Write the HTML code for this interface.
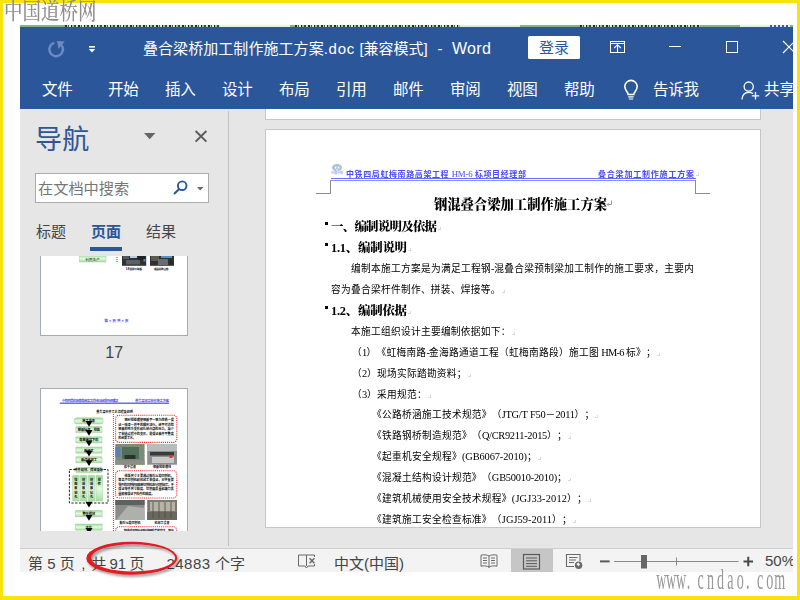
<!DOCTYPE html>
<html lang="zh-CN">
<head>
<meta charset="utf-8">
<title>叠合梁桥加工制作施工方案.doc [兼容模式] - Word</title>
<style>
*{box-sizing:border-box;margin:0;padding:0}
html,body{width:800px;height:600px;overflow:hidden;background:#fff}
body{position:relative;font-family:"Liberation Sans","Noto Sans CJK SC",sans-serif;color:#222}
.abs{position:absolute}
#frame{position:absolute;left:0;top:0;width:800px;height:600px;border-style:solid;border-color:#f8e30c;border-width:3px 3px 4px 3px;z-index:50;pointer-events:none}
#wm1{left:4px;top:-6.5px;z-index:60;font-family:"Liberation Serif","Noto Serif CJK SC",serif;font-size:18.5px;font-weight:500;color:#8e8e8e;white-space:nowrap;transform-origin:0 0;transform:scaleY(1.2)}
#wm2{left:0;top:0;z-index:30}
#win{left:20px;top:25px;width:773px;height:547px;overflow:hidden;background:#e6e6e6}
#bgstrip{left:0;top:0;width:773px;height:2px;background:#84b581}
#blue{left:0;top:2px;width:773px;height:82px;background:#2b579a}
.t{position:absolute;white-space:nowrap;color:#fff}
.tt{top:10px;font-size:15px}
.tab{position:absolute;top:50px;font-size:15.5px;letter-spacing:-0.2px;color:#fff;white-space:nowrap}
#login{left:508px;top:9px;width:52px;height:23px;border-radius:1.5px;background:#fff;color:#2b579a;font-size:15px;text-align:center;line-height:24px}
#nav{left:0;top:84px;width:209px;height:439px;background:#e6e6e6}
#split{left:208px;top:86px;width:1px;height:435px;background:#c2c2c2}
#navtitle{left:15px;top:9px;font-size:27px;color:#2b579a;white-space:nowrap;letter-spacing:0.3px}
#search{left:15px;top:64px;width:174px;height:30px;background:#fff;border:1px solid #ababab}
#search span{position:absolute;left:2px;top:2px;font-size:15.2px;color:#767676;white-space:nowrap}
.ntab{position:absolute;top:111px;font-size:15px;color:#444;white-space:nowrap}
#thumbs{left:0;top:147px;width:209px;height:275px;overflow:hidden}
.thumb{position:absolute;left:20px;width:149px;background:#fff;border:1px solid #a6adba}
#doc{left:209px;top:84px;width:564px;height:439px;background:#e6e6e6;overflow:hidden}
#pg0{left:36px;top:-5px;width:496px;height:16px;background:#fff;border:1px solid #c6c6c6}
#pg1{left:36px;top:20px;width:496px;height:399px;background:#fff;border:1px solid #c6c6c6}
#status{left:0;top:523px;width:773px;height:24px;background:#f3f3f3;border-top:1px solid #d0d0d0}
.st{position:absolute;top:3px;font-size:15px;color:#444;white-space:nowrap}
.song{font-family:"Liberation Serif","Noto Serif CJK SC",serif}
.dl{position:absolute;white-space:nowrap;font-family:"Liberation Serif","Noto Sans CJK SC",sans-serif;font-size:9px;color:#000;text-spacing-trim:space-all;line-height:14px}
.en{font-family:"Liberation Serif",serif;font-size:10.4px;letter-spacing:-0.25px;word-spacing:0.6px}
.hdr .en{font-size:8.8px;letter-spacing:-0.2px;word-spacing:0.5px;font-weight:normal}
.hd{position:absolute;white-space:nowrap;font-family:"Liberation Serif","Noto Serif CJK SC",serif;font-weight:900;color:#000}
.hdr{position:absolute;white-space:nowrap;font-family:"Liberation Serif","Noto Sans CJK SC",sans-serif;color:#4a4aff;line-height:11px;font-weight:bold}
.pm{position:absolute;width:3px;height:3px;border-right:1px solid #dadada;border-bottom:1px solid #dadada}
.bul{position:absolute;width:3px;height:3px;background:#000}
</style>
</head>
<body>
<div id="wm1" class="abs">中国道桥网</div>
<div id="win" class="abs">
  <div id="bgstrip" class="abs">
    <div class="abs" style="left:45px;top:0;width:155px;height:2px;background:repeating-linear-gradient(90deg,#2a2a2a 0 2px,#b9d6b5 2px 3px,#555 3px 4px,#dfeadd 4px 6px,#1f1f1f 6px 7px,#9cc798 7px 9px,#444 9px 11px,#cfe0cc 11px 13px)"></div>
    <div class="abs" style="left:200px;top:0;width:70px;height:2px;background:#e9f0e8"></div>
    <div class="abs" style="left:275px;top:0;width:165px;height:2px;background:repeating-linear-gradient(90deg,#2a2a2a 0 2px,#b9d6b5 2px 3px,#555 3px 4px,#dfeadd 4px 6px,#1f1f1f 6px 7px,#9cc798 7px 9px,#444 9px 11px,#cfe0cc 11px 13px)"></div>
    <div class="abs" style="left:440px;top:0;width:60px;height:2px;background:#dfe9dd"></div>
    <div class="abs" style="left:560px;top:0;width:120px;height:2px;background:repeating-linear-gradient(90deg,#2a2a2a 0 2px,#b9d6b5 2px 3px,#555 3px 4px,#dfeadd 4px 6px,#1f1f1f 6px 7px,#9cc798 7px 9px,#444 9px 11px,#cfe0cc 11px 13px)"></div>
    <div class="abs" style="left:720px;top:0;width:30px;height:2px;background:#e6ece6"></div>
    <div class="abs" style="left:750px;top:0;width:20px;height:2px;background:repeating-linear-gradient(90deg,#4b4bd0 0 2px,#dfe6f5 2px 4px)"></div>
  </div>
  <div id="blue" class="abs">
    <div class="t tt" style="left:123px"><span style="letter-spacing:0.06px">叠合梁桥加工制作施工方案</span><span id="t2" style="letter-spacing:0.7px">.doc</span> <span id="t3" style="margin-left:0.33px">[兼容模式]</span> <span id="t4" style="margin-left:5.53px">-</span> <span id="t5" style="margin-left:5.33px;letter-spacing:0.35px;font-size:16px">Word</span></div>
    <div id="login" class="abs">登录</div>
    <div class="tab" style="left:22px">文件</div>
    <div class="tab" style="left:88px">开始</div>
    <div class="tab" style="left:145px">插入</div>
    <div class="tab" style="left:202px">设计</div>
    <div class="tab" style="left:259px">布局</div>
    <div class="tab" style="left:316px">引用</div>
    <div class="tab" style="left:373px">邮件</div>
    <div class="tab" style="left:430px">审阅</div>
    <div class="tab" style="left:487px">视图</div>
    <div class="tab" style="left:544px">帮助</div>
    <div class="tab" style="left:633px">告诉我</div>
    <div class="tab" style="left:744px">共享</div>
  </div>
  <div id="nav" class="abs">
    <div id="navtitle" class="abs">导航</div>
    <div id="search" class="abs"><span>在文档中搜索</span></div>
    <div class="ntab" style="left:16px">标题</div>
    <div class="ntab" style="left:71px;color:#2b579a;font-weight:bold">页面</div>
    <div class="ntab" style="left:126px">结果</div>
    <div class="abs" style="left:70px;top:138px;width:32px;height:4px;background:#2b579a"></div>
    <div id="thumbs" class="abs">
<svg class="abs" style="left:-20px;top:-256px" width="800" height="600" viewBox="0 0 800 600">
<defs><linearGradient id="gg" x1="0" y1="0" x2="0" y2="1"><stop offset="0" stop-color="#9ddb98"/><stop offset="0.5" stop-color="#e4fae1"/><stop offset="1" stop-color="#a6e0a1"/></linearGradient></defs>
<rect x="40.5" y="240.5" width="147" height="95" fill="#fff" stroke="#a3abb9"/>
<rect x="79.5" y="255" width="26.5" height="7" rx="0" fill="url(#gg)" stroke="#8fbf88" stroke-width="0.4"/>
<text x="92.7" y="260.6" font-size="3.6" text-anchor="middle" fill="#222" font-family="'Liberation Sans','Noto Sans CJK SC',sans-serif">利用生产</text>
<path d="M117 255 V263" stroke="#e8282c" stroke-width="1.2" stroke-dasharray="1 1"/>
<rect x="122" y="255" width="24.2" height="10.8" fill="#2f3133"/><rect x="123" y="256" width="6" height="3" fill="#55585c"/><rect x="130" y="255.500" width="7" height="2.500" fill="#b9cbe6"/><rect x="138" y="256" width="7" height="4" fill="#1f2123"/><rect x="126" y="260" width="14" height="4.500" fill="#5d6062"/><rect x="143.500" y="259" width="2" height="2.500" fill="#4f86d0"/>
<rect x="150" y="255" width="24" height="10.8" fill="#33302e"/><rect x="151" y="256" width="8" height="5" fill="#5c5a55"/><rect x="161" y="255.500" width="11" height="2.500" fill="#5a8fd0"/><rect x="158" y="259" width="10" height="6" fill="#6a6c6d"/><rect x="169" y="260" width="4" height="5" fill="#27292a"/>
<text x="134" y="269.7" font-size="2.7" textLength="16.500" text-anchor="middle" fill="#000" font-weight="bold" font-family="'Liberation Sans','Noto Sans CJK SC',sans-serif">1-8 组拼平联板</text>
<text x="161.2" y="269.7" font-size="2.7" textLength="14.500" text-anchor="middle" fill="#000" font-weight="bold" font-family="'Liberation Sans','Noto Sans CJK SC',sans-serif">成品验收合格</text>
<text x="116.400" y="322.4" font-size="3.7" text-anchor="middle" font-weight="bold" fill="#5252ff" font-family="'Liberation Sans','Noto Sans CJK SC',sans-serif">第 × 页 共 × 页</text>
<text x="114.2" y="357.5" font-size="16" text-anchor="middle" fill="#444" font-family="'Liberation Sans',sans-serif">17</text>
<rect x="40.5" y="388.5" width="147" height="180" fill="#fff" stroke="#a3abb9"/>
<text x="62" y="402.4" font-size="3.3" fill="#5050f5" font-weight="bold" textLength="56" font-family="'Liberation Sans','Noto Sans CJK SC',sans-serif">中铁四局虹梅南路高架工程HM-6标项目经理部</text>
<text x="135" y="402.4" font-size="3.3" fill="#5050f5" font-weight="bold" textLength="34" font-family="'Liberation Sans','Noto Sans CJK SC',sans-serif">叠合梁加工制作施工方案</text>
<path d="M59.8 403.3 H169" stroke="#6a6af8" stroke-width="1.6"/>
<text x="114.6" y="412.9" font-size="3.05" text-anchor="middle" fill="#000" font-weight="bold" font-family="'Liberation Sans','Noto Sans CJK SC',sans-serif">叠合梁杆件工艺流程及说明</text>
<rect x="74" y="417.8" width="29.3" height="6.2" rx="3" fill="url(#gg)" stroke="#8fbf88" stroke-width="0.4"/>
<text x="88.65" y="422.4" font-size="3.2" text-anchor="middle" fill="#000" font-weight="bold" font-family="'Liberation Sans','Noto Sans CJK SC',sans-serif">施工准备</text>
<rect x="75.8" y="426.6" width="26.2" height="6" rx="0.5" fill="url(#gg)" stroke="#8fbf88" stroke-width="0.4"/>
<text x="88.89999999999999" y="431.0" font-size="3.2" text-anchor="middle" fill="#000" font-weight="bold" font-family="'Liberation Sans','Noto Sans CJK SC',sans-serif">钢板矫平、预处</text>
<rect x="75.8" y="436.8" width="26.2" height="6.2" rx="0.5" fill="url(#gg)" stroke="#8fbf88" stroke-width="0.4"/>
<text x="88.89999999999999" y="441.4" font-size="3.2" text-anchor="middle" fill="#000" font-weight="bold" font-family="'Liberation Sans','Noto Sans CJK SC',sans-serif">电脑放样下料</text>
<rect x="75.8" y="447" width="26.2" height="6.2" rx="0.5" fill="url(#gg)" stroke="#8fbf88" stroke-width="0.4"/>
<text x="88.89999999999999" y="451.59999999999997" font-size="3.2" text-anchor="middle" fill="#000" font-weight="bold" font-family="'Liberation Sans','Noto Sans CJK SC',sans-serif">板加工</text>
<rect x="75.8" y="456.7" width="26.2" height="6" rx="0.5" fill="url(#gg)" stroke="#8fbf88" stroke-width="0.4"/>
<text x="88.89999999999999" y="461.09999999999997" font-size="3.2" text-anchor="middle" fill="#000" font-weight="bold" font-family="'Liberation Sans','Noto Sans CJK SC',sans-serif">板边缘加工</text>
<path d="M85.5 421.0 H92.5 L89.0 426.8 Z" fill="#000"/>
<path d="M85.5 430.0 H92.5 L89.0 435.8 Z" fill="#000"/>
<path d="M85.5 440.4 H92.5 L89.0 446.2 Z" fill="#000"/>
<path d="M85.5 450.6 H92.5 L89.0 456.4 Z" fill="#000"/>
<path d="M85.5 460.2 H92.5 L89.0 466.0 Z" fill="#000"/>
<rect x="69.4" y="469.5" width="38.6" height="33.5" fill="none" stroke="#111" stroke-width="0.9" stroke-dasharray="2.4 1.4"/>
<rect x="76" y="467.4" width="25.5" height="5.2" rx="0.5" fill="url(#gg)" stroke="#8fbf88" stroke-width="0.4"/>
<text x="88.7" y="471.4" font-size="3.2" text-anchor="middle" fill="#000" font-weight="bold" font-family="'Liberation Sans','Noto Sans CJK SC',sans-serif">杆件组拼、焊接及矫</text>
<rect x="72.6" y="475.4" width="6.6" height="25.6" rx="0.3" fill="url(#gg)" stroke="#8fbf88" stroke-width="0.4"/>
<text x="75.89999999999999" y="481.0" font-size="3.2" text-anchor="middle" fill="#000" font-weight="bold" font-family="'Liberation Sans','Noto Sans CJK SC',sans-serif">弦</text>
<text x="75.89999999999999" y="485.2" font-size="3.2" text-anchor="middle" fill="#000" font-weight="bold" font-family="'Liberation Sans','Noto Sans CJK SC',sans-serif">腹</text>
<text x="75.89999999999999" y="489.4" font-size="3.2" text-anchor="middle" fill="#000" font-weight="bold" font-family="'Liberation Sans','Noto Sans CJK SC',sans-serif">板</text>
<text x="75.89999999999999" y="493.6" font-size="3.2" text-anchor="middle" fill="#000" font-weight="bold" font-family="'Liberation Sans','Noto Sans CJK SC',sans-serif">制</text>
<text x="75.89999999999999" y="497.8" font-size="3.2" text-anchor="middle" fill="#000" font-weight="bold" font-family="'Liberation Sans','Noto Sans CJK SC',sans-serif">孔</text>
<rect x="80.4" y="475.4" width="6.6" height="25.6" rx="0.3" fill="url(#gg)" stroke="#8fbf88" stroke-width="0.4"/>
<text x="83.7" y="481.0" font-size="3.2" text-anchor="middle" fill="#000" font-weight="bold" font-family="'Liberation Sans','Noto Sans CJK SC',sans-serif">拼</text>
<text x="83.7" y="485.2" font-size="3.2" text-anchor="middle" fill="#000" font-weight="bold" font-family="'Liberation Sans','Noto Sans CJK SC',sans-serif">接</text>
<text x="83.7" y="489.4" font-size="3.2" text-anchor="middle" fill="#000" font-weight="bold" font-family="'Liberation Sans','Noto Sans CJK SC',sans-serif">板</text>
<text x="83.7" y="493.6" font-size="3.2" text-anchor="middle" fill="#000" font-weight="bold" font-family="'Liberation Sans','Noto Sans CJK SC',sans-serif">制</text>
<text x="83.7" y="497.8" font-size="3.2" text-anchor="middle" fill="#000" font-weight="bold" font-family="'Liberation Sans','Noto Sans CJK SC',sans-serif">孔</text>
<rect x="88.2" y="475.4" width="6.6" height="25.6" rx="0.3" fill="url(#gg)" stroke="#8fbf88" stroke-width="0.4"/>
<text x="91.5" y="481.0" font-size="3.2" text-anchor="middle" fill="#000" font-weight="bold" font-family="'Liberation Sans','Noto Sans CJK SC',sans-serif">拼</text>
<text x="91.5" y="485.2" font-size="3.2" text-anchor="middle" fill="#000" font-weight="bold" font-family="'Liberation Sans','Noto Sans CJK SC',sans-serif">接</text>
<text x="91.5" y="489.4" font-size="3.2" text-anchor="middle" fill="#000" font-weight="bold" font-family="'Liberation Sans','Noto Sans CJK SC',sans-serif">板</text>
<text x="91.5" y="493.6" font-size="3.2" text-anchor="middle" fill="#000" font-weight="bold" font-family="'Liberation Sans','Noto Sans CJK SC',sans-serif">钻</text>
<text x="91.5" y="497.8" font-size="3.2" text-anchor="middle" fill="#000" font-weight="bold" font-family="'Liberation Sans','Noto Sans CJK SC',sans-serif">孔</text>
<rect x="96" y="475.4" width="6.6" height="25.6" rx="0.3" fill="url(#gg)" stroke="#8fbf88" stroke-width="0.4"/>
<text x="99.3" y="481.0" font-size="3.2" text-anchor="middle" fill="#000" font-weight="bold" font-family="'Liberation Sans','Noto Sans CJK SC',sans-serif">探</text>
<text x="99.3" y="485.2" font-size="3.2" text-anchor="middle" fill="#000" font-weight="bold" font-family="'Liberation Sans','Noto Sans CJK SC',sans-serif">伤</text>
<path d="M85.5 501.8 H92.5 L89.0 507.6 Z" fill="#000"/>
<rect x="75.4" y="510.5" width="26.8" height="6.2" rx="0.5" fill="url(#gg)" stroke="#8fbf88" stroke-width="0.4"/>
<text x="88.8" y="515.2" font-size="3.2" text-anchor="middle" fill="#000" font-weight="bold" font-family="'Liberation Sans','Noto Sans CJK SC',sans-serif">整体预拼</text>
<path d="M85.5 515.0 H92.5 L89.0 520.8 Z" fill="#000"/>
<rect x="75.4" y="524" width="26.8" height="6.2" rx="0.5" fill="url(#gg)" stroke="#8fbf88" stroke-width="0.4"/>
<text x="88.8" y="528.7" font-size="3.2" text-anchor="middle" fill="#000" font-weight="bold" font-family="'Liberation Sans','Noto Sans CJK SC',sans-serif">涂装</text>
<path d="M85.5 528.0 H92.5 L89.0 533.8 Z" fill="#000"/>
<path d="M113.4 414 V532" stroke="#e8282c" stroke-width="1" stroke-dasharray="1 1"/>
<rect x="115.6" y="415.2" width="61.2" height="27.2" rx="3.5" fill="none" stroke="#e8282c" stroke-width="1.1" stroke-dasharray="1.1 1"/>
<rect x="115.6" y="470.800" width="61.2" height="27.2" rx="3.5" fill="none" stroke="#e8282c" stroke-width="1.1" stroke-dasharray="1.1 1"/>
<rect x="115.6" y="526.800" width="61.2" height="27.2" rx="3.5" fill="none" stroke="#e8282c" stroke-width="1.1" stroke-dasharray="1.1 1"/>
<text x="118.3" y="421.2" font-size="3.1" fill="#000" font-weight="bold" font-family="'Liberation Sans','Noto Sans CJK SC',sans-serif" textLength="55.5">　　钢材预处理使钢板平一钢为除锈一保</text>
<text x="118.3" y="425.7" font-size="3.1" fill="#000" font-weight="bold" font-family="'Liberation Sans','Noto Sans CJK SC',sans-serif" textLength="55.5">证一喷漆一烘干的顺序进行。经平可消除</text>
<text x="118.3" y="430.2" font-size="3.1" fill="#000" font-weight="bold" font-family="'Liberation Sans','Noto Sans CJK SC',sans-serif" textLength="55.5">钢板的残余变形和扎制内部的应力。减少</text>
<text x="118.3" y="434.7" font-size="3.1" fill="#000" font-weight="bold" font-family="'Liberation Sans','Noto Sans CJK SC',sans-serif" textLength="55.5">了制造过程中的变形，是保证板件平整度</text>
<text x="118.3" y="439.2" font-size="3.1" fill="#000" font-weight="bold" font-family="'Liberation Sans','Noto Sans CJK SC',sans-serif" textLength="17.5">的必要工艺。</text>
<text x="118.3" y="476.8" font-size="3.1" fill="#000" font-weight="bold" font-family="'Liberation Sans','Noto Sans CJK SC',sans-serif" textLength="55.5">　　排版尺寸主要通过数控火焰切割机、</text>
<text x="118.3" y="481.3" font-size="3.1" fill="#000" font-weight="bold" font-family="'Liberation Sans','Noto Sans CJK SC',sans-serif" textLength="55.5">等离子切割机和机加工来保证。对于重要</text>
<text x="118.3" y="485.8" font-size="3.1" fill="#000" font-weight="bold" font-family="'Liberation Sans','Noto Sans CJK SC',sans-serif" textLength="55.5">零件的切割使用精密切割机进行切割加工。手</text>
<text x="118.3" y="490.3" font-size="3.1" fill="#000" font-weight="bold" font-family="'Liberation Sans','Noto Sans CJK SC',sans-serif" textLength="55.5">保证零件尺寸精度、切割面质量和坡口质</text>
<text x="118.3" y="494.8" font-size="3.1" fill="#000" font-weight="bold" font-family="'Liberation Sans','Noto Sans CJK SC',sans-serif" textLength="36">量能够保证下料件的精度。</text>
<text x="118.3" y="532.3" font-size="3.1" fill="#000" font-weight="bold" font-family="'Liberation Sans','Noto Sans CJK SC',sans-serif" textLength="55.5">　　划线采用划针和粉线相结合的方法，划出</text>
<rect x="115.3" y="444" width="29.3" height="20.7" fill="#7d8a7c"/><rect x="122" y="447" width="17" height="12" fill="#4f6f58"/><rect x="115.3" y="447" width="5" height="10" fill="#5c7fae"/><rect x="124.500" y="455" width="11" height="4" fill="#2c332e"/><rect x="115.3" y="460.500" width="29.3" height="4.2" fill="#8c8f88"/>
<rect x="147.2" y="444" width="29.8" height="20.7" fill="#8e8e8e"/><rect x="147.2" y="444" width="29.8" height="7" fill="#b9bcbc"/><rect x="150" y="452" width="24" height="3.5" fill="#3a3a3a"/><rect x="152" y="457" width="22" height="6" fill="#c9c9c7"/><rect x="169.500" y="455" width="3" height="3" fill="#d43a3a"/>
<rect x="115.3" y="500" width="29.3" height="20" fill="#8a8c88"/><rect x="115.3" y="500" width="29.3" height="5" fill="#5d625e"/><path d="M117 519 L128 506 L144 508 L144.600 520 L117 520Z" fill="#aeb0ac"/>
<rect x="147.2" y="500" width="29.8" height="20" fill="#7c7a70"/><rect x="150" y="502" width="25" height="9" fill="#b5b3a6"/><rect x="147.2" y="512" width="29.8" height="8" fill="#6a685e"/><path d="M153 502 V518 M159 502 V518 M165 502 V518 M171 502 V518" stroke="#4c4a43" stroke-width="0.8"/>
<text x="130" y="468.3" font-size="3" text-anchor="middle" fill="#000" font-weight="bold" font-family="'Liberation Sans','Noto Sans CJK SC',sans-serif">校平设备</text><text x="162" y="468.3" font-size="3" text-anchor="middle" fill="#000" font-weight="bold" font-family="'Liberation Sans','Noto Sans CJK SC',sans-serif">钢板预处理线</text>
<text x="130" y="524.2" font-size="3" text-anchor="middle" fill="#000" font-weight="bold" font-family="'Liberation Sans','Noto Sans CJK SC',sans-serif">数控火焰切割机</text><text x="162" y="524.2" font-size="3" text-anchor="middle" fill="#000" font-weight="bold" font-family="'Liberation Sans','Noto Sans CJK SC',sans-serif">机加工设备</text>
</svg>
    </div>
  </div>
  <div id="split" class="abs"></div>
  <div id="doc" class="abs">
    <div id="pg0" class="abs"></div>
    <div id="pg1" class="abs"></div>

    <!--DOCSTART-->
    <div class="abs" style="left:102px;top:69px;width:365px;height:1px;background:#6c6cff"></div>
    <div class="abs" style="left:102px;top:71px;width:365px;height:1px;background:#8c8cff"></div>
    <div class="abs" style="left:87px;top:71px;width:15px;height:14px;border-right:1px solid #8c8c8c;border-bottom:1px solid #8c8c8c"></div>
    <div class="abs" style="left:466px;top:71px;width:15px;height:14px;border-left:1px solid #8c8c8c;border-bottom:1px solid #8c8c8c"></div>
    <svg class="abs" style="left:101px;top:54px" width="14" height="12" viewBox="0 0 14 12"><ellipse cx="7" cy="4.6" rx="4.9" ry="3.600" fill="#a9bedb"/><path d="M4.600 3.400 h1.700 v2.200 h-1.700z M7.700 3.400 h1.700 v2.200 h-1.700z M5.600 6.400 h2.800 v1.200 h-2.800z" fill="#fff"/><text x="7" y="11.3" font-size="3" text-anchor="middle" fill="#9fb0dd" font-family="'Liberation Sans','Noto Sans CJK SC',sans-serif" font-weight="bold">中国中铁</text></svg>
    <svg class="abs" style="left:376px;top:90px" width="10" height="10" viewBox="0 0 10 10" fill="none"><path d="M6.500 1.500 V5.500 H2.200 M3.800 3.800 L2.200 5.500 L3.800 7.200" stroke="#9a9a9a" stroke-width="1"/></svg>
    <div class="pm" style="left:467px;top:64px"></div>
    <div class="bul" style="left:96px;top:113px"></div>
    <div class="bul" style="left:96px;top:134px"></div>
    <div class="bul" style="left:96px;top:197px"></div>
<div id="lines" class="abs" style="left:0;top:0;width:564px;height:439px;will-change:transform">
<!--LINES-->
<div class="hd" style="left:205px;top:85.0px;font-size:13.3px;letter-spacing:0.01px">钢混叠合梁加工制作施工方案</div>
<div class="hd" style="left:102px;top:107.5px;font-size:12.4px;letter-spacing:-0.69px">一、编制说明及依据</div>
<div class="pm" style="left:209px;top:117.5px"></div>
<div class="hd" style="left:102px;top:128.5px;font-size:12.4px;letter-spacing:-0.21px">1.1、编制说明</div>
<div class="pm" style="left:179px;top:138.5px"></div>
<div class="dl" style="left:122px;top:152.8px;font-size:9.7px;letter-spacing:0.31px">编制本施工方案是为满足工程钢<span class="en">-</span>混叠合梁预制梁加工制作的施工要求，主要内</div>
<div class="dl" style="left:102px;top:173.8px;font-size:9.7px;letter-spacing:0.30px">容为叠合梁杆件制作、拼装、焊接等。</div>
<div class="pm" style="left:273px;top:181px"></div>
<div class="hd" style="left:102px;top:191.5px;font-size:12.4px;letter-spacing:-0.21px">1.2、编制依据</div>
<div class="pm" style="left:179px;top:201.5px"></div>
<div class="dl" style="left:122px;top:215.8px;font-size:9.7px;letter-spacing:0.30px">本施工组织设计主要编制依据如下：</div>
<div class="pm" style="left:283px;top:223px"></div>
<div class="dl" style="left:123px;top:236.8px;font-size:9.7px;letter-spacing:0.30px">（<span class="en" style="letter-spacing:-0.77px">1</span>）《虹梅南路<span class="en" style="letter-spacing:-0.77px">-</span>金海路通道工程（虹梅南路段）施工图<span class="en" style="letter-spacing:-0.77px"> HM-6 </span>标》；</div>
<div class="pm" style="left:428px;top:244px"></div>
<div class="dl" style="left:123px;top:257.8px;font-size:9.7px;letter-spacing:0.30px">（<span class="en">2</span>）现场实际踏勘资料；</div>
<div class="pm" style="left:239px;top:265px"></div>
<div class="dl" style="left:123px;top:278.8px;font-size:9.7px;letter-spacing:0.30px">（<span class="en">3</span>）采用规范：</div>
<div class="pm" style="left:199px;top:286px"></div>
<div class="dl" style="left:143px;top:298.8px;font-size:9.7px;letter-spacing:0.30px">《公路桥涵施工技术规范》（<span class="en" style="letter-spacing:-0.31px">JTG/T F50</span>－<span class="en" style="letter-spacing:-0.31px">2011</span>）；</div>
<div class="pm" style="left:366px;top:306px"></div>
<div class="dl" style="left:143px;top:319.8px;font-size:9.7px;letter-spacing:0.30px">《铁路钢桥制造规范》（<span class="en" style="letter-spacing:-0.29px">Q/CR9211-2015</span>）；</div>
<div class="pm" style="left:339px;top:327px"></div>
<div class="dl" style="left:143px;top:340.8px;font-size:9.7px;letter-spacing:0.30px">《起重机安全规程》<span class="en" style="letter-spacing:-0.10px">(GB6067-2010)</span>；</div>
<div class="pm" style="left:309px;top:348px"></div>
<div class="dl" style="left:143px;top:361.8px;font-size:9.7px;letter-spacing:0.30px">《混凝土结构设计规范》（<span class="en" style="letter-spacing:-0.23px">GB50010-2010)</span>；</div>
<div class="pm" style="left:339px;top:369px"></div>
<div class="dl" style="left:143px;top:382.8px;font-size:9.7px;letter-spacing:0.30px">《建筑机械使用安全技术规程》<span class="en" style="letter-spacing:0.14px">(JGJ33-2012</span>）；</div>
<div class="pm" style="left:359px;top:390px"></div>
<div class="dl" style="left:143px;top:403.8px;font-size:9.7px;letter-spacing:0.30px">《建筑施工安全检查标准》（<span class="en" style="letter-spacing:0.03px">JGJ59-2011</span>）；</div>
<div class="pm" style="left:344px;top:411px"></div>
<div class="hdr" style="left:117px;top:59.5px;font-size:8px;letter-spacing:0.60px">中铁四局虹梅南路高架工程<span class="en"> HM-6 </span>标项目经理部</div>
<div class="hdr" style="left:369px;top:59.5px;font-size:8px;letter-spacing:0.80px">叠合梁加工制作施工方案</div>
<!--/LINES-->
</div>
    <!--DOCEND-->
  </div>
  <div id="status" class="abs">
    <div class="st" style="left:8px">第 5 页<span style="margin-left:6.5px;margin-right:6px">,</span><span style="word-spacing:-1px">共 91 页</span></div>
    <div class="st" style="left:146.5px"><span style="letter-spacing:0.45px">24883</span> <span style="margin-left:0.33px">个字</span></div>
    <div class="st" style="left:314px">中文(中国)</div>
    <div class="st" style="left:745px">50%</div>
  </div>
</div>

<svg id="ico" class="abs" style="left:0;top:0;z-index:20" width="800" height="600" viewBox="0 0 800 600" fill="none">
  <defs><clipPath id="wclip"><rect x="20" y="25" width="773" height="547"/></clipPath></defs>
  <g clip-path="url(#wclip)">
  <!-- redo (dim) -->
  <path d="M54.3 42.8 A6.8 6.8 0 1 0 61.6 45.3" stroke="#6c8bc3" stroke-width="2.4"/>
  <path d="M57 41 L64.800 41.5 L58.400 49 Z" fill="#6c8bc3"/>
  <!-- QAT dropdown -->
  <rect x="89" y="46" width="6" height="1.6" fill="#fff"/>
  <path d="M88.8 49 H95.2 L92 52.4 Z" fill="#fff"/>
  <!-- ribbon display options -->
  <rect x="610.5" y="41.5" width="14" height="11" stroke="#fff" stroke-width="1"/>
  <path d="M610.5 43.500 H624.500" stroke="#fff" stroke-width="1"/>
  <path d="M617.500 44.5 V52.5 M614.2 48 L617.500 44.7 L620.800 48" stroke="#fff" stroke-width="1.1"/>
  <!-- minimize / maximize / close -->
  <path d="M669 46.5 H681" stroke="#fff" stroke-width="1"/>
  <rect x="726.5" y="41.5" width="11" height="11" stroke="#fff" stroke-width="1"/>
  <path d="M783 41 L795 53 M795 41 L783 53" stroke="#fff" stroke-width="1.1"/>
  <!-- lightbulb -->
  <path d="M628.2 94.5 C628.2 92 624.8 90.5 624.8 86.6 A6.2 6.2 0 0 1 637.2 86.6 C637.2 90.5 633.8 92 633.8 94.5 Z" stroke="#fff" stroke-width="1.6"/>
  <path d="M628.3 96.8 H633.7 M628.8 99 H633.2" stroke="#fff" stroke-width="1.2"/>
  <!-- share -->
  <circle cx="748.7" cy="86.6" r="4.6" stroke="#fff" stroke-width="1.3"/>
  <path d="M742 99.5 C742.3 94.5 745 92.3 748.7 92.3 C750.6 92.3 752 92.8 753 93.6" stroke="#fff" stroke-width="1.3"/>
  <path d="M755.5 92 V99.5 M751.8 95.8 H759.2" stroke="#fff" stroke-width="1.3"/>
  <!-- nav pane dropdown + close -->
  <path d="M144 133 H155.4 L149.7 139.3 Z" fill="#666"/>
  <path d="M195.6 131 L206.4 141.6 M206.4 131 L195.6 141.6" stroke="#5a5a5a" stroke-width="1.9"/>
  <!-- search magnifier + dropdown -->
  <circle cx="182.2" cy="185.7" r="4.3" stroke="#2b579a" stroke-width="1.9"/>
  <path d="M179.2 188.9 L174 194" stroke="#2b579a" stroke-width="2.1"/>
  <path d="M197 187 H203.4 L200.2 190.4 Z" fill="#666"/>
  <!-- status: proofing -->
  <path d="M306.5 566 V555 H298.5 V566 H305 L306.5 568 L308 566 H314.5 V564 M306.5 555 H314.5 V557" stroke="#6a6a6a" stroke-width="1"/>
  <path d="M309.6 558.3 L314.4 563.3 M314.4 558.3 L309.6 563.3" stroke="#6a6a6a" stroke-width="1.5"/>
  <!-- status: read mode -->
  <path d="M489 556 V568 M489 556 C487 554.6 483.5 554.6 481 555.2 V566.2 C483.5 565.6 487 565.8 489 567 C491 565.8 494.500 565.6 497 566.2 V555.2 C494.5 554.6 491 554.6 489 556" stroke="#6a6a6a" stroke-width="1"/>
  <path d="M483 558 H487 M483 560.5 H487 M483 563 H487 M491 558 H495 M491 560.5 H495 M491 563 H495" stroke="#6a6a6a" stroke-width="1"/>
  <!-- status: print layout selected -->
  <rect x="511" y="549" width="42" height="23" fill="#c6c6c6"/>
  <rect x="523.500" y="554.5" width="16" height="14.500" stroke="#5a5a5a" stroke-width="1.2"/>
  <path d="M526 558 H537 M526 560.800 H537 M526 563.600 H537 M526 566.300 H537" stroke="#5a5a5a" stroke-width="1"/>
  <!-- status: web layout -->
  <path d="M580 561 V554.500 H566.500 V566.500 H574" stroke="#6a6a6a" stroke-width="1.1"/>
  <path d="M569 557.5 H577.5 M569 560 H576 M569 562.5 H574" stroke="#6a6a6a" stroke-width="1"/>
  <circle cx="578.6" cy="565.2" r="3.7" fill="#6a6a6a"/>
  <path d="M576.4 564 L578.5 562.6 L580 564.5 L578.4 566.2 Z" fill="#f3f3f3"/>
  <!-- zoom slider -->
  <rect x="600" y="560.4" width="9.6" height="2" fill="#5a5a5a"/>
  <path d="M614 561.5 H738.5" stroke="#8a8a8a" stroke-width="1"/>
  <path d="M676.5 557.5 V565.5" stroke="#8a8a8a" stroke-width="1"/>
  <rect x="641" y="555" width="6" height="13.5" fill="#666"/>
  <path d="M743.500 561.500 H753 M748.250 556.800 V566.200" stroke="#4a4a4a" stroke-width="2"/>
  </g>
  <!-- red annotation ellipse -->
  <defs><filter id="sh" x="-20%" y="-30%" width="140%" height="170%"><feDropShadow dx="1.6" dy="2.2" stdDeviation="1.3" flood-color="#000" flood-opacity="0.38"/></filter></defs>
  <path filter="url(#sh)" fill="#e21b22" fill-rule="evenodd" d="M86.3 558.4 A45.5 16.5 0 1 1 177.3 558.0 A45.5 16.5 0 1 1 86.3 558.4 Z M91.2 558.2 A42 13.6 0 1 0 175.2 557.6 A42 13.6 0 1 0 91.2 558.2 Z"/>
</svg>
<svg id="wm2" class="abs" width="800" height="600" viewBox="0 0 800 600"><text transform="translate(656.3 589.3) scale(0.47 1)" font-family="'Liberation Serif',serif" font-size="30" fill="#989898" x="-0.3 20.7 41.7 64.6 87.9 108.1 129.1 151.0 171.2 190.7 214.1 234.2 251.1" y="0">www.cndao.com</text></svg>
<div id="frame"></div>
</body>
</html>
